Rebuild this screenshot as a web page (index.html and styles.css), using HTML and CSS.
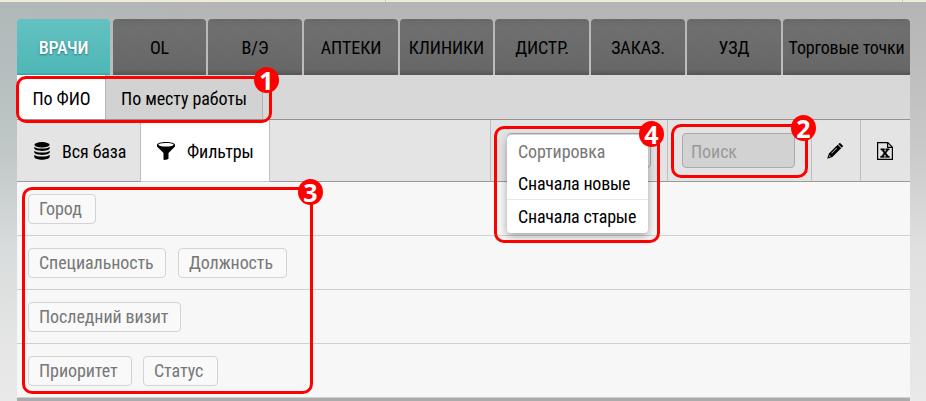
FILE: index.html
```html
<!DOCTYPE html>
<html lang="ru">
<head>
<meta charset="utf-8">
<title>Врачи</title>
<link rel="stylesheet" href="styles.css">
</head>
<body>
<div class="strip"><i></i><i></i></div>
<main class="app">
  <nav class="tabs">
    <a class="tab active">ВРАЧИ</a><a class="tab">OL</a><a class="tab">В/Э</a><a class="tab">АПТЕКИ</a><a class="tab">КЛИНИКИ</a><a class="tab">ДИСТР.</a><a class="tab">ЗАКАЗ.</a><a class="tab">УЗД</a><a class="tab">Торговые точки</a>
  </nav>
  <nav class="subtabs">
    <a class="subtab current">По ФИО</a><a class="subtab place">По месту работы</a>
  </nav>
  <div class="toolbar">
    <div class="tool base">
      <svg width="16" height="18" viewBox="0 0 16 18"><ellipse cx="8" cy="2.800" rx="7.600" ry="2.700"/><path d="M.3 4.700C2 7.200 14 7.200 15.700 4.700V6.600C14.500 9.700 1.500 9.700.3 6.600ZM.3 8.700C2 11.200 14 11.200 15.700 8.700V10.600C14.500 13.700 1.500 13.700.3 10.600ZM.3 12.700C2 15.200 14 15.200 15.700 12.700V15C14.500 18.600 1.500 18.600.3 15Z"/></svg>
      <span>Вся база</span>
    </div>
    <div class="tool filters">
      <svg width="18" height="18" viewBox="0 0 18 18"><path fill-rule="evenodd" d="M9 0C14 0 18 1.300 18 2.900V4.500L11.500 11V16.500C11.500 17.500 6.500 18.500 6.500 17.500V11L0 4.500V2.900C0 1.300 4 0 9 0ZM9 1C4.800 1 1.400 1.800 1.400 2.800S4.800 4.600 9 4.600 16.600 3.800 16.600 2.800 13.200 1 9 1Z"/></svg>
      <span>Фильтры</span>
    </div>
    <div class="tool gap"></div>
    <div class="tool sort">
      <div class="select"></div>
      <div class="menu"><div class="option title">Сортировка</div><div class="option">Сначала новые</div><div class="option last">Сначала старые</div></div>
    </div>
    <div class="tool find"><div class="search">Поиск</div></div>
    <div class="tool edit"><svg width="16" height="16" viewBox="0 0 16 16"><path fill-rule="evenodd" d="M11.300 1.200 12.200.3Q12.800-.2 13.400.3L15.700 2.600Q16.200 3.200 15.700 3.800L14.800 4.700ZM10.700 1.800 14.200 5.300 5.400 14.100.2 15.800 1.900 10.600ZM9.600 4.800 4.400 10 4.800 10.400 10 5.200ZM2.700 12.200 1.900 14.100 3.800 13.300Z"/></svg></div>
    <div class="tool excel"><svg width="16" height="18" viewBox="0 0 16 18"><path class="sheet" d="M.6.600H10.800L15.400 5.200V17.400H.6ZM10.600.8V5.400H15.200"/><path class="glyph" d="M3.800 6.700H7.500V8H6.800L8.100 9.900 9.400 8H8.700V6.700H12.200V8H11.300L9.100 11 11.500 14.200H12.400V15.500H8.500V14.200H9.300L7.900 12.200 6.500 14.200H7.300V15.500H3.500V14.200H4.500L6.900 11 4.700 8H3.800Z"/></svg></div>
  </div>
  <section class="rows">
    <div class="row"><span class="chip w67">Город</span></div>
    <div class="row"><span class="chip w138">Специальность</span><span class="chip w109">Должность</span></div>
    <div class="row"><span class="chip w153">Последний визит</span></div>
    <div class="row"><span class="chip w104">Приоритет</span><span class="chip w75">Статус</span></div>
  </section>
  <div class="bottom"></div>
</main>
<div class="mark m1"><b>1</b></div>
<div class="mark m2"><b>2</b></div>
<div class="mark m3"><b>3</b></div>
<div class="mark m4"><b>4</b></div>
</body>
</html>
```
FILE: styles.css
```css
* { box-sizing: border-box; }
body {
  margin: 0; width: 926px; height: 401px; overflow: hidden; position: relative;
  font: 18px/22px "Roboto Condensed", Roboto, sans-serif; font-stretch: 75%; letter-spacing: -.08px; color: #000;
  background: radial-gradient(ellipse 230px 290px at 0 60px, rgba(165,192,192,.35), rgba(190,205,205,0)), linear-gradient(#b4b4b4, #bcbcbc 15%, #cacaca 38%, #e0e0e0 62%, #e9e9e9);
}
.strip { height: 2px; display: flex; background: #efecd7; }
.strip i:first-child { width: 386px; border-right: 1px solid #c9c7b5; }
.strip i:last-child { width: 517px; border-right: 1px solid #c9c7b5; }
.app { width: 893px; margin: 17px 0 0 17px; }
.tabs { display: grid; grid-template-columns: 93px 93px 94px 93px 93px 94px 94px 93px 127px; column-gap: 2px; height: 56px; }
.tabs .active { margin-right: 0; }
.tabs { grid-template-columns: 94px 93px 94px 94px 93px 94px 94px 94px 127px; }
.tab {
  display: flex; align-items: center; justify-content: center; white-space: nowrap;
  border-radius: 4px 4px 0 0; padding-top: 2px;
  background: repeating-linear-gradient(45deg, rgba(0,0,0,.025) 0 1px, transparent 1px 3px), linear-gradient(#6a6a6a, #707070 15%, #686868 90%, #555);
}
.tab:last-child { letter-spacing: -.2px; }
.tab.active { width: 93px; background: linear-gradient(#64c1c1, #4eb7b7 96%, #349b9b); color: #fff; font-weight: 500; letter-spacing: -.2px; text-shadow: 0 1px 2px #26777a; }
.subtabs { display: flex; height: 45px; border-bottom: 1px solid #929292; background: #d8d8d8; }
.subtab { display: flex; align-items: center; justify-content: center; padding-top: 3px; white-space: nowrap; border-right: 1px solid #b5b5b5; background: #d2d2d2; }
.subtab.current { width: 89px; padding-left: 1px; background: #fff; }
.subtab.place { width: 157px; }
.toolbar { display: flex; height: 62px; background: #e4e4e4; }
.tool { display: flex; align-items: center; border-right: 1px solid #bebebe; border-bottom: 1px solid #999; white-space: nowrap; }
.tool svg { flex: none; display: block; }
.base { width: 124px; padding-left: 17px; gap: 12px; }
.base span, .filters span { padding-top: 2px; }
.filters { width: 129px; padding-left: 16px; gap: 12px; background: #fff; border-bottom-color: #ccc; }
.gap { width: 221px; }
.sort { width: 177px; position: relative; }
.select { width: 144px; height: 35px; margin-left: 16px; border: 1px solid #aaa; border-radius: 4px; }
.menu { position: absolute; z-index: 2; left: 16px; top: 15px; width: 141px; height: 98px; border-radius: 4px; background: #fff; box-shadow: 0 3px 8px rgba(0,0,0,.35); overflow: hidden; }
.option { height: 33px; padding: 6px 11px 0; border-bottom: 1px solid #e8e8e8; letter-spacing: -.22px; }
.option.title { height: 32px; color: #777; border: 0; letter-spacing: -.12px; }
.option.last { border: 0; }
.find { width: 144px; padding-left: 14px; }
.search { width: 113px; height: 35px; border: 1px solid #aaa; border-radius: 4px; background: #d2d2d2; color: #999; padding: 7px 8px; }
.edit { width: 49px; padding-left: 15px; }
.excel { width: 49px; padding-left: 16px; border-right: 0; }
.sheet { fill: none; stroke: #000; stroke-width: 1.2; }
.glyph { stroke: #000; stroke-width: .4; }
.row { height: 54px; display: flex; align-items: center; gap: 12px; padding-left: 11px; background: #f7f7f7; border-bottom: 1px solid #d0d0d0; }
.chip { height: 30px; border: 1px solid #d3d3d3; border-radius: 4px; background: #f9f9f9; padding: 3px 0 0 10px; color: #777; white-space: nowrap; }
.w67 { width: 68px; } .w138 { width: 138px; } .w109 { width: 109px; } .w153 { width: 153px; } .w104 { width: 104px; margin-right: -1px; } .w75 { width: 75px; }
.bottom { height: 10px; background: #ababab; }
.mark { position: absolute; z-index: 5; border: 3px solid #f00; border-radius: 10px; }
.mark b {
  position: absolute; width: 25px; height: 26px; border-radius: 50%; background: #f00; color: #fff;
  font: 700 25px/26px "Open Sans", sans-serif; text-align: center; letter-spacing: 0;
}
.m1 { left: 16px; top: 76px; width: 256px; height: 47px; }
.m1 b { left: 235px; top: -12px; }
.m2 { left: 671px; top: 124px; width: 137px; height: 54px; }
.m2 b { left: 117px; top: -12px; }
.m3 { left: 22px; top: 187px; width: 291px; height: 207px; }
.m3 b { left: 273px; top: -11px; }
.m4 { left: 494px; top: 126px; width: 166px; height: 117px; }
.m4 b { left: 142px; top: -8px; }
```
